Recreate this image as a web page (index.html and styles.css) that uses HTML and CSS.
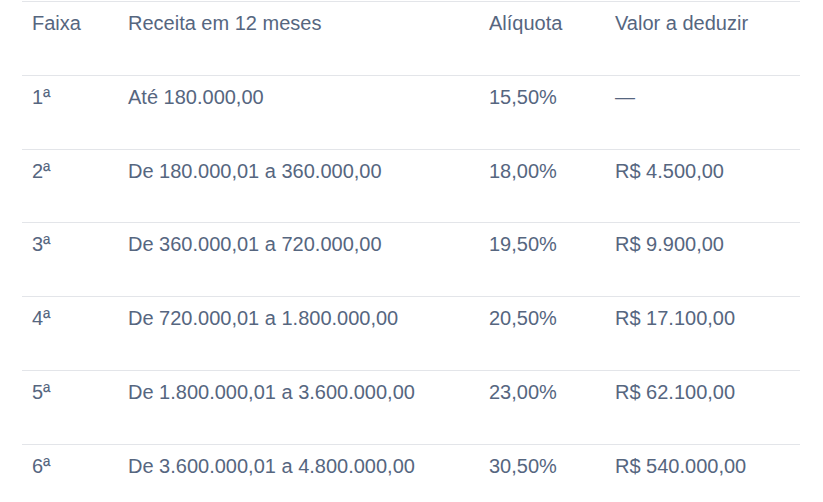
FILE: index.html
```html
<!DOCTYPE html>
<html lang="pt-BR">
<head>
<meta charset="utf-8">
<link rel="stylesheet" href="styles.css">
</head>
<body>
<div class="wrap">
<table class="faixas">
  <colgroup>
    <col class="c1"><col class="c2"><col class="c3"><col class="c4">
  </colgroup>
  <thead>
    <tr><th>Faixa</th><th>Receita em 12 meses</th><th>Alíquota</th><th>Valor a deduzir</th></tr>
  </thead>
  <tbody>
    <tr><td>1ª</td><td>Até 180.000,00</td><td>15,50%</td><td>—</td></tr>
    <tr><td>2ª</td><td>De 180.000,01 a 360.000,00</td><td>18,00%</td><td>R$ 4.500,00</td></tr>
    <tr><td>3ª</td><td>De 360.000,01 a 720.000,00</td><td>19,50%</td><td>R$ 9.900,00</td></tr>
    <tr><td>4ª</td><td>De 720.000,01 a 1.800.000,00</td><td>20,50%</td><td>R$ 17.100,00</td></tr>
    <tr><td>5ª</td><td>De 1.800.000,01 a 3.600.000,00</td><td>23,00%</td><td>R$ 62.100,00</td></tr>
    <tr><td>6ª</td><td>De 3.600.000,01 a 4.800.000,00</td><td>30,50%</td><td>R$ 540.000,00</td></tr>
  </tbody>
</table>
</div>
</body>
</html>
```
FILE: styles.css
```css
html, body {
  margin: 0;
  padding: 0;
  background: #ffffff;
}
.wrap {
  padding: 1px 23px 0 22px;
}
.faixas {
  width: 778px;
  border-collapse: collapse;
  table-layout: fixed;
  font-family: "Liberation Sans", Arial, sans-serif;
  font-size: 20px;
  color: #56667f;
}
.c1 { width: 96px; }
.c2 { width: 361px; }
.c3 { width: 126px; }
.c4 { width: 195px; }
.faixas th,
.faixas td {
  text-align: left;
  font-weight: normal;
  vertical-align: top;
  padding: 10px 10px 0 10px;
  height: 62.8px;
  line-height: 23px;
  border-top: 1px solid #e3e5e9;
}
```
